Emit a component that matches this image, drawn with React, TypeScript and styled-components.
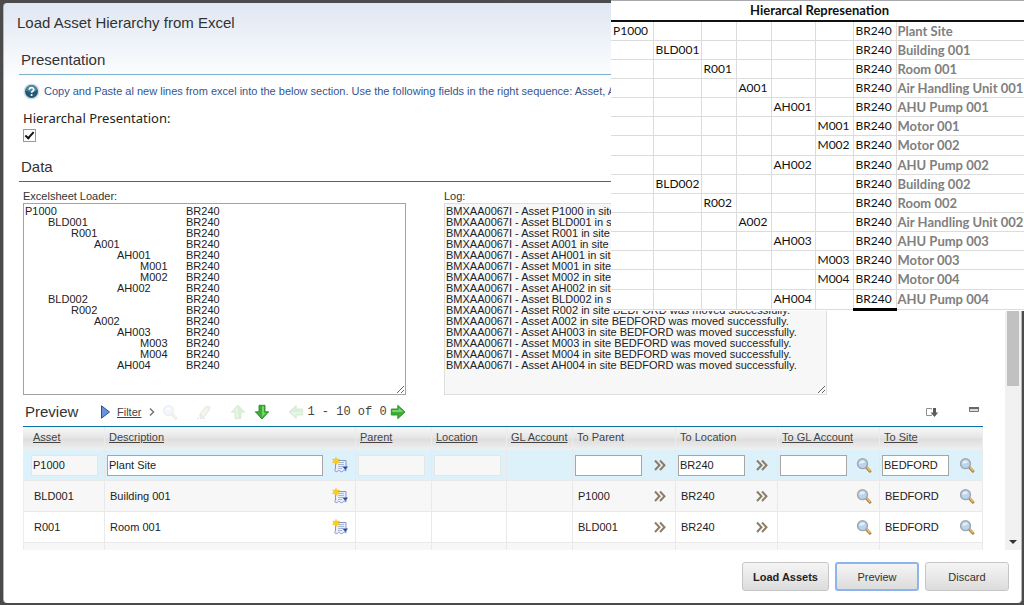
import React from "react";
import styled, { createGlobalStyle, css } from "styled-components";

const GlobalStyle = createGlobalStyle`
  *, *::before, *::after { box-sizing: border-box; }
  body {
    margin: 0;
    background: #4b4b4b;
    font-family: "Liberation Sans", Arial, sans-serif;
    font-size: 11px;
    color: #222;
  }
`;

const Stage = styled.div`
  position: relative;
  display: flex;
  height: 100vh;
  padding: 3px 2px 2px 3px;
  overflow: hidden;
`;

const Dialog = styled.section`
  flex: 1;
  min-width: 0;
  display: flex;
  flex-direction: column;
  border: 1px solid #b4b6ba;
  border-width: 0 1px 0 1px;
  border-radius: 4px;
  background: linear-gradient(#dfe7f3 0, #ffffff 80px);
`;

const DialogTitle = styled.h1`
  margin: 0;
  padding: 10px 13px 0;
  font-size: 15px;
  line-height: 20px;
  font-weight: normal;
  color: #333;
`;

const DialogBody = styled.div`
  flex: 1;
  min-height: 0;
  display: flex;
`;

const Content = styled.main`
  flex: 1;
  min-width: 0;
  padding: 17px 22px 0 15px;
  overflow-y: auto;
  scrollbar-width: none;
`;

const ScrollTrack = styled.div`
  width: 16px;
  display: flex;
  flex-direction: column;
  align-items: center;
  background: #f1f1f1;
`;

const ScrollThumb = styled.div`
  width: 12px;
  height: 336px;
  margin-top: 17px;
  background: #c1c1c1;
`;

const ScrollArrow = styled.div`
  margin: auto 0 6px;
  border: 4px solid transparent;
  border-top-color: #333;
  border-bottom-width: 0;
`;

const SectionTitle = styled.h2<{ $rule: string }>`
  margin: 0;
  padding: 0 2px 4px;
  border-bottom: 1px solid ${(p) => p.$rule};
  font-size: 15px;
  line-height: 20px;
  font-weight: normal;
  color: #333;
`;

const Hint = styled.p`
  display: flex;
  align-items: center;
  gap: 4px;
  margin: 0;
  padding: 7px 4px 0;
  height: 25px;
  white-space: nowrap;
  overflow: hidden;
  color: #35558f;
  line-height: 18px;
  svg { flex: none; }
`;

const CheckField = styled.div`
  display: flex;
  flex-direction: column;
  align-items: flex-start;
  padding: 8px 4px 15px;
  label {
    font-family: "Noto Sans", "Open Sans", sans-serif;
    font-size: 13px;
    line-height: 20px;
    color: #222;
  }
`;

const Checkbox = styled.input`
  appearance: none;
  width: 13px;
  height: 13px;
  margin: 1px 0 0;
  border: 1px solid #9a9a9a;
  background: #fff;
  &:checked::after {
    content: "";
    display: block;
    width: 5px;
    height: 9px;
    margin: 0 0 0 3px;
    border: solid #111;
    border-width: 0 2px 2px 0;
    transform: rotate(42deg);
  }
`;

const LoaderRow = styled.div`
  display: grid;
  grid-template-columns: repeat(2, 383px);
  gap: 38px;
  padding: 8px 4px 0;
`;

const LoaderField = styled.div`
  display: flex;
  flex-direction: column;
  label { line-height: 13px; color: #333; }
`;

const LoaderText = styled.textarea<{ $muted?: boolean }>`
  height: 192px;
  margin: 0;
  padding: 2px 1px;
  border: 1px solid ${(p) => (p.$muted ? "#dedede" : "#a3a3a3")};
  border-radius: 0;
  background: ${(p) => (p.$muted ? "#f7f7f7" : "#fff")};
  font: 11px/11px "Liberation Sans", Arial, sans-serif;
  tab-size: 23px;
  white-space: pre;
  overflow: hidden;
  color: #222;
  outline: none;
`;

const Toolbar = styled.div`
  display: flex;
  align-items: center;
  height: 32px;
  margin-left: 4px;
  padding: 2px 0 0 2px;
  border-bottom: 1px solid #0a6fa5;
`;

const ToolbarTitle = styled.h2`
  width: 76px;
  margin: 0;
  font-size: 15px;
  line-height: 20px;
  font-weight: normal;
  color: #333;
`;

const ToolGroup = styled.div<{ $gap: number; $start?: number }>`
  display: flex;
  align-items: center;
  gap: ${(p) => p.$gap}px;
  margin-left: ${(p) => p.$start || 0}px;
`;

const ToolEnd = styled(ToolGroup)`
  margin-left: auto;
  padding-right: 1px;
`;

const IconButton = styled.button<{ $faded?: boolean }>`
  flex: none;
  display: block;
  width: 16px;
  height: 16px;
  padding: 0;
  border: 0;
  background: none;
  opacity: ${(p) => (p.$faded ? 0.18 : 1)};
  svg { display: block; }
`;

const TextLink = styled.a`
  color: #444;
  text-decoration: underline;
`;

const Pager = styled.span`
  font-family: "Liberation Mono", monospace;
  font-size: 12px;
  white-space: pre;
  color: #444;
`;

const DataTable = styled.table`
  width: calc(100% - 4px);
  margin-left: 4px;
  border-collapse: separate;
  border-spacing: 0;
  table-layout: fixed;
`;

const HeadCell = styled.th`
  height: 23px;
  padding: 0 0 3px 4px;
  border-right: 1px solid #ececec;
  background: linear-gradient(#f8f8f8 0, #e6e6e6 45%, #dedede 55%, #f0f0f0 100%);
  text-align: left;
  font-weight: normal;
  color: #444;
  white-space: nowrap;
  &:first-child { padding-left: 10px; }
`;

const BodyRow = styled.tr<{ $tone: "selected" | "odd" | "even" }>`
  background: ${(p) =>
    p.$tone === "selected" ? "#dcf1f9" : p.$tone === "odd" ? "#f7f7f7" : "#fff"};
`;

const Cell = styled.td<{ $inset: number }>`
  height: 31px;
  padding: 0 7px 0 ${(p) => p.$inset}px;
  border-right: 1px solid #e9e9e9;
  border-bottom: 1px solid #e9e9e9;
  &:first-child { padding-left: ${(p) => p.$inset + 5}px; }
  &:first-child { border-left: 1px solid #ececec; }
`;

const CellLine = styled.div`
  display: flex;
  align-items: center;
  justify-content: space-between;
  height: 30px;
  white-space: nowrap;
`;

const CellInput = styled.input<{ $wide?: boolean }>`
  width: ${(p) => (p.$wide ? "216px" : "67px")};
  height: 21px;
  margin: 0;
  padding: 0 1px;
  border: 1px solid #a6a6a6;
  border-radius: 0;
  background: #fff;
  font: 11px "Liberation Sans", Arial, sans-serif;
  color: #222;
  &:read-only {
    border-color: #e6e6e6;
    background: #f7f7f7;
  }
`;

const Footer = styled.footer`
  display: flex;
  justify-content: flex-end;
  gap: 6px;
  padding: 12px 12px 12px;
`;

const PushButton = styled.button<{ $strong?: boolean; $focused?: boolean }>`
  min-width: 84px;
  height: 29px;
  padding: 0 10px;
  border: 1px solid #c6c6c6;
  border-radius: 3px;
  background: linear-gradient(#f5f5f5, #dcdcdc);
  font: 11px "Liberation Sans", Arial, sans-serif;
  color: #333;
  ${(p) => p.$strong && css`
    font-weight: bold;
    color: #222;
  `}
  ${(p) => p.$focused && css`
    border: 2px solid #8db4ec;
  `}
`;

const Sheet = styled.table`
  position: absolute;
  top: 0;
  right: 0;
  width: 413px;
  height: 311px;
  border-collapse: collapse;
  table-layout: fixed;
  background: #fff;
  font-family: Lato, "Open Sans", sans-serif;
  font-size: 12px;
  line-height: 16px;
  color: #111;
`;

const SheetTitle = styled.th`
  height: 20px;
  padding: 0 0 0 4px;
  border-top: 1px solid #a9a9ad;
  border-bottom: 2px solid #111;
  font-size: 13px;
  font-weight: bold;
  text-align: center;
`;

const SheetCell = styled.td<{ $marked?: boolean }>`
  padding: 0 0 0 2px;
  border-right: 1px solid #dcdcdc;
  border-bottom: ${(p) => (p.$marked ? "3px solid #000" : "1px solid #dcdcdc")};
  white-space: nowrap;
  &:last-child {
    padding-left: 1px;
    border-right: 0;
    font-size: 13px;
    font-weight: bold;
    color: #808080;
  }
`;

type Asset = { code: string; level: number; name: string };

const assets: Asset[] = [
  { code: "P1000", level: 0, name: "Plant Site" },
  { code: "BLD001", level: 1, name: "Building 001" },
  { code: "R001", level: 2, name: "Room 001" },
  { code: "A001", level: 3, name: "Air Handling Unit 001" },
  { code: "AH001", level: 4, name: "AHU Pump 001" },
  { code: "M001", level: 5, name: "Motor 001" },
  { code: "M002", level: 5, name: "Motor 002" },
  { code: "AH002", level: 4, name: "AHU Pump 002" },
  { code: "BLD002", level: 1, name: "Building 002" },
  { code: "R002", level: 2, name: "Room 002" },
  { code: "A002", level: 3, name: "Air Handling Unit 002" },
  { code: "AH003", level: 4, name: "AHU Pump 003" },
  { code: "M003", level: 5, name: "Motor 003" },
  { code: "M004", level: 5, name: "Motor 004" },
  { code: "AH004", level: 4, name: "AHU Pump 004" },
];

// Each code is wider than one tab stop, so the site column is at stop 7.
const loaderText = assets
  .map((a) => "\t".repeat(a.level) + a.code + "\t".repeat(6 - a.level) + "BR240")
  .join("\n");

const logText = assets
  .map((a) => `BMXAA0067I - Asset ${a.code} in site BEDFORD was moved successfully.`)
  .join("\n");

const sheetColumns = [42, 48, 35, 35, 44, 38, 43];
const levels = [0, 1, 2, 3, 4, 5];

const HelpIcon = () => (
  <svg width="17" height="17" viewBox="0 0 17 17" aria-hidden="true">
    <circle cx="8.500" cy="8.500" r="8" fill="#d3dde3" />
    <circle cx="8.500" cy="8.500" r="6.500" fill="#1f5876" />
    <path d="M2.500 7a6.200 6.200 0 0 1 12 0c-3 2.500-9 2.500-12 0z" fill="#5f93ad" opacity=".7" />
    <path d="M6.300 6.800c0-3 4.500-2.800 4.500-.3 0 1.700-2.200 1.700-2.200 3.200" fill="none" stroke="#fff" strokeWidth="1.700" />
    <circle cx="8.600" cy="12" r="1.100" fill="#fff" />
  </svg>
);

const MagnifierIcon = () => (
  <svg width="16" height="16" viewBox="0 0 16 16" aria-hidden="true">
    <path d="M10.500 10.500l3.500 3.700" stroke="#a07c48" strokeWidth="2.800" strokeLinecap="round" />
    <path d="M11.200 10.800l2.800 3" stroke="#f2bd5a" strokeWidth="1.500" strokeLinecap="round" />
    <circle cx="6.500" cy="6.700" r="4.900" fill="#bcd5ee" stroke="#a2a8b0" strokeWidth="1.500" />
    <path d="M3.300 6.700a3.200 3.200 0 0 1 5.700-1.900c-1 1.500-3.700 2-5.700 1.900z" fill="#e3effb" />
  </svg>
);

const DetailIcon = () => (
  <svg width="16" height="16" viewBox="0 0 16 16" aria-hidden="true">
    <path d="M3.500 3.500h10.500v10.500c-1.200-1-2-1-3 0s-2 1-3 0-1.500-.8-2.500.3c-1 .8-2.500.2-2.800-.8.600-.8.800-1.500.8-2.500z" fill="#e9effa" stroke="#8696c2" />
    <path d="M7 5.500h5M6 7.500h6M6 9.500h5M6 11.500h4" stroke="#a9b6d8" />
    <path d="M4 .3l1 2.200 2.600-.5L6.400 4l1.400 1.500-2.300.3L4 7.800 2.800 5.800.3 5.500 1.800 4 .8 1.900l2.300.6z" fill="#f9d018" stroke="#e3ad10" strokeWidth=".4" />
    <path d="M10.500 9.500h5.500L13.300 13z" fill="#2650a8" />
  </svg>
);

const ChevronsIcon = () => (
  <svg width="16" height="16" viewBox="0 0 16 16" aria-hidden="true">
    <path d="M3 3.500l4.500 4.700L3 13M8 3.500l4.500 4.700L8 13" fill="none" stroke="#8d7c68" strokeWidth="2" />
  </svg>
);

const ArrowIcon = ({ turn }: { turn: number }) => (
  <svg width="16" height="16" viewBox="0 0 16 16" aria-hidden="true">
    <g transform={`rotate(${turn} 8 8)`}>
      <path d="M1.300 5h6.500V1.300L15 8l-7.200 6.700V11H1.300z" fill="#3cae36" stroke="#2b8a2c" strokeWidth=".9" />
      <path d="M2.200 6h6.500V3.800L13.300 8H2.200z" fill="#8fe07c" opacity=".75" />
    </g>
  </svg>
);

const EraserIcon = () => (
  <svg width="16" height="16" viewBox="0 0 16 16" aria-hidden="true">
    <path d="M4 10l6-7.500 4 .5-1 3.500-5.500 7-3.500-.5z" fill="#d8c8a8" stroke="#776a58" />
    <path d="M4 10l3.500 3.500" stroke="#776a58" />
    <path d="M1 14.500h8" stroke="#666" strokeDasharray="2 1" />
  </svg>
);

const TriangleIcon = () => (
  <svg width="9" height="14" viewBox="0 0 9 14" aria-hidden="true">
    <path d="M.5 .8L8.500 7 .5 13.200z" fill="#6a93d8" stroke="#2b4f9e" />
  </svg>
);

const DownloadIcon = () => (
  <svg width="16" height="16" viewBox="0 0 16 16" aria-hidden="true">
    <path d="M7.500 5.500V4.500h-5v7h5v-1" fill="none" stroke="#8f8f8f" />
    <path d="M9 4h3v4.500h2.300L10.500 13 6.700 8.500H9z" fill="#5c5c5c" />
  </svg>
);

const MinimizeIcon = () => (
  <svg width="16" height="16" viewBox="0 0 16 16" aria-hidden="true">
    <path d="M3.500 3.500h9v4h-9z" fill="#ddd" stroke="#777" />
    <path d="M3 3h10v2H3z" fill="#666" />
  </svg>
);

type Column = {
  key: string;
  label: string;
  width?: number;
  link?: boolean;
  readOnly?: boolean;
  noInput?: boolean;
  icon?: "detail" | "menu" | "lookup";
};

const columns: Column[] = [
  { key: "asset", label: "Asset", width: 82, link: true, readOnly: true },
  { key: "description", label: "Description", link: true, icon: "detail" },
  { key: "parent", label: "Parent", width: 76, link: true, readOnly: true },
  { key: "location", label: "Location", width: 75, link: true, readOnly: true },
  { key: "gl", label: "GL Account", width: 66, link: true, noInput: true },
  { key: "toParent", label: "To Parent", width: 103, icon: "menu" },
  { key: "toLocation", label: "To Location", width: 102, icon: "menu" },
  { key: "toGl", label: "To GL Account", width: 102, link: true, icon: "lookup" },
  { key: "toSite", label: "To Site", width: 103, link: true, icon: "lookup" },
];

const previewRows: Record<string, string>[] = [
  { asset: "P1000", description: "Plant Site", toLocation: "BR240", toSite: "BEDFORD" },
  { asset: "BLD001", description: "Building 001", toParent: "P1000", toLocation: "BR240", toSite: "BEDFORD" },
  { asset: "R001", description: "Room 001", toParent: "BLD001", toLocation: "BR240", toSite: "BEDFORD" },
  {},
];

const cellIcons = {
  detail: <DetailIcon />,
  menu: <ChevronsIcon />,
  lookup: <MagnifierIcon />,
};

function PreviewTable() {
  return (
    <DataTable>
      <colgroup>
        {columns.map((c) => (
          <col key={c.key} width={c.width} />
        ))}
      </colgroup>
      <thead>
        <tr>
          {columns.map((c) => (
            <HeadCell key={c.key} scope="col">
              {c.link ? <TextLink href="#">{c.label}</TextLink> : c.label}
            </HeadCell>
          ))}
        </tr>
      </thead>
      <tbody>
        {previewRows.map((row, i) => {
          const editing = i === 0;
          return (
            <BodyRow key={i} $tone={editing ? "selected" : i % 2 ? "odd" : "even"}>
              {columns.map((c) => (
                <Cell key={c.key} $inset={editing ? 2 : 5}>
                  <CellLine>
                    {editing && !c.noInput ? (
                      <CellInput
                        aria-label={c.label}
                        defaultValue={row[c.key] || ""}
                        readOnly={c.readOnly}
                        $wide={c.key === "description"}
                      />
                    ) : (
                      <span>{row[c.key]}</span>
                    )}
                    {c.icon && (
                      <IconButton type="button" aria-label={c.label}>
                        {cellIcons[c.icon]}
                      </IconButton>
                    )}
                  </CellLine>
                </Cell>
              ))}
            </BodyRow>
          );
        })}
      </tbody>
    </DataTable>
  );
}

function HierarchySheet() {
  return (
    <Sheet>
      <colgroup>
        {sheetColumns.map((w, i) => (
          <col key={i} width={w} />
        ))}
        <col />
      </colgroup>
      <thead>
        <tr>
          <SheetTitle colSpan={8}>Hierarcal Represenation</SheetTitle>
        </tr>
      </thead>
      <tbody>
        {assets.map((a, i) => (
          <tr key={a.code}>
            {levels.map((level) => (
              <SheetCell key={level}>{a.level === level ? a.code : ""}</SheetCell>
            ))}
            <SheetCell $marked={i === assets.length - 1}>BR240</SheetCell>
            <SheetCell>{a.name}</SheetCell>
          </tr>
        ))}
      </tbody>
    </Sheet>
  );
}

export default function App() {
  return (
    <>
      <GlobalStyle />
      <Stage>
        <Dialog>
          <DialogTitle>Load Asset Hierarchy from Excel</DialogTitle>
          <DialogBody>
            <Content>
              <SectionTitle $rule="#7fb0cd">Presentation</SectionTitle>
              <Hint>
                <HelpIcon />
                Copy and Paste al new lines from excel into the below section. Use the
                following fields in the right sequence: Asset, Asset
              </Hint>
              <CheckField>
                <label htmlFor="hierarchal">Hierarchal Presentation:</label>
                <Checkbox id="hierarchal" type="checkbox" defaultChecked />
              </CheckField>
              <SectionTitle $rule="#0d7ca8">Data</SectionTitle>
              <LoaderRow>
                <LoaderField>
                  <label htmlFor="loader">Excelsheet Loader:</label>
                  <LoaderText id="loader" defaultValue={loaderText} spellCheck={false} />
                </LoaderField>
                <LoaderField>
                  <label htmlFor="log">Log:</label>
                  <LoaderText id="log" $muted readOnly value={logText} spellCheck={false} />
                </LoaderField>
              </LoaderRow>
              <Toolbar>
                <ToolbarTitle>Preview</ToolbarTitle>
                <ToolGroup $gap={7}>
                  <TriangleIcon />
                  <TextLink href="#">Filter</TextLink>
                  <svg width="8" height="10" viewBox="0 0 8 10" aria-hidden="true">
                    <path d="M2 1.500L5.500 5 2 8.500" fill="none" stroke="#777" strokeWidth="1.500" />
                  </svg>
                </ToolGroup>
                <ToolGroup $gap={18} $start={6}>
                  <IconButton type="button" aria-label="Search" $faded><MagnifierIcon /></IconButton>
                  <IconButton type="button" aria-label="Clear" $faded><EraserIcon /></IconButton>
                  <ToolGroup $gap={8}>
                    <IconButton type="button" aria-label="Up" $faded><ArrowIcon turn={-90} /></IconButton>
                    <IconButton type="button" aria-label="Down"><ArrowIcon turn={90} /></IconButton>
                  </ToolGroup>
                  <ToolGroup $gap={3}>
                    <IconButton type="button" aria-label="Back" $faded><ArrowIcon turn={180} /></IconButton>
                    <Pager>1 - 10 of 0</Pager>
                    <IconButton type="button" aria-label="Forward"><ArrowIcon turn={0} /></IconButton>
                  </ToolGroup>
                </ToolGroup>
                <ToolEnd $gap={26}>
                  <IconButton type="button" aria-label="Download"><DownloadIcon /></IconButton>
                  <IconButton type="button" aria-label="Minimize"><MinimizeIcon /></IconButton>
                </ToolEnd>
              </Toolbar>
              <PreviewTable />
            </Content>
            <ScrollTrack>
              <ScrollThumb />
              <ScrollArrow />
            </ScrollTrack>
          </DialogBody>
          <Footer>
            <PushButton type="button" $strong>Load Assets</PushButton>
            <PushButton type="button" $focused>Preview</PushButton>
            <PushButton type="button">Discard</PushButton>
          </Footer>
        </Dialog>
        <HierarchySheet />
      </Stage>
    </>
  );
}
